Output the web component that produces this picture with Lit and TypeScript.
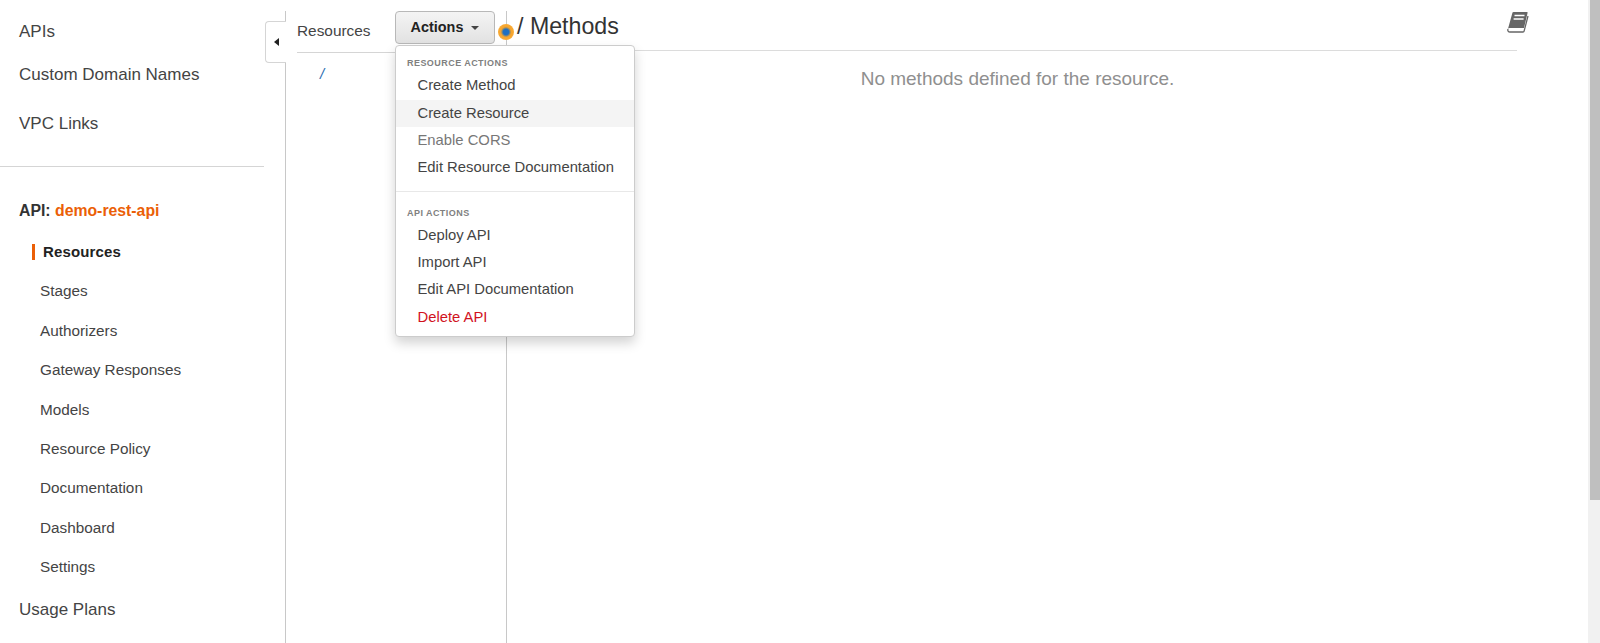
import { LitElement, html, css, svg } from "lit";
import { customElement } from "lit/decorators.js";

const subItems = ["Stages", "Authorizers", "Gateway Responses", "Models", "Resource Policy", "Documentation", "Dashboard", "Settings"];

@customElement("app-root")
export class AppRoot extends LitElement {
  static styles = css`
    :host { display: block; height: 643px; overflow: hidden; background: #fff; font-family: "Liberation Sans", Arial, sans-serif; color: #444; }
    .page { display: flex; height: 643px; position: relative; }
    .side { width: 285px; flex: none; padding-top: 11px; box-sizing: border-box; }
    .top { display: flex; flex-direction: column; width: 264px; border-bottom: 1px solid #d5d5d5; height: 156px; box-sizing: border-box; padding-left: 19px; }
    .top a { font-size: 17px; color: #444; }
    .a1 { margin-top: 11px; line-height: 20px; }
    .a2 { margin-top: 23px; line-height: 20px; }
    .a3 { margin-top: 29px; line-height: 20px; }
    .api { margin: 35px 0 0 19px; font-size: 15.8px; font-weight: bold; line-height: 18px; color: #333; }
    .api span { color: #eb5f07; }
    .subs { display: flex; flex-direction: column; margin-top: 12px; }
    .sub { height: 39.4px; line-height: 39.4px; padding-left: 40px; font-size: 15.3px; color: #444; }
    .sub.on { padding-left: 32px; }
    .sub.on b { display: inline-block; border-left: 3px solid #eb5f07; padding-left: 8px; height: 16px; line-height: 16px; font-size: 15px; color: #222; letter-spacing: 0.15px; }
    .usage { margin: 13px 0 0 19px; font-size: 17px; line-height: 20px; color: #444; }
    .body { flex: 1; min-width: 0; border-left: 1px solid #c8c8c8; margin-top: 11px; display: flex; }
    .res { width: 221px; flex: none; border-right: 1px solid #c8c8c8; box-sizing: border-box; padding-left: 11px; }
    .reshead { display: flex; align-items: flex-start; height: 41px; border-bottom: 1px solid #d5d5d5; }
    .reshead span { font-size: 15.4px; line-height: 39px; color: #444; width: 98px; }
    .btn { font: bold 14.4px "Liberation Sans", Arial, sans-serif; color: #222; width: 100px; height: 33px; box-sizing: border-box; border: 1px solid #b8b8b8; border-radius: 4px; background: linear-gradient(#f4f4f4, #e2e2e2); display: flex; align-items: center; justify-content: center; gap: 8px; padding: 0 0 2px; }
    .caret { width: 0; height: 0; border-left: 4px solid transparent; border-right: 4px solid transparent; border-top: 4px solid #444; margin-top: 2px; }
    .root { font-size: 15px; font-style: italic; color: #2a6cb0; margin: 12px 0 0 23px; line-height: 18px; }
    .detail { flex: 1; min-width: 0; padding-right: 83px; }
    .dhead { height: 39px; border-bottom: 1px solid #dcdcdc; display: flex; justify-content: space-between; padding-left: 10px; }
    .title { font-size: 23.2px; line-height: 31px; color: #333; }
    .book { margin-right: -12px; }
    .empty { text-align: center; font-size: 19px; line-height: 22px; color: #8f8f8f; margin: 17px 0 0 11px; }
    .tab { position: absolute; left: 265px; top: 21px; width: 21px; height: 42px; box-sizing: border-box; background: #fff; border: 1px solid #d5d5d5; border-right: none; border-radius: 4px 0 0 4px; display: flex; align-items: center; justify-content: center; }
    .tab i { width: 0; height: 0; border-top: 4px solid transparent; border-bottom: 4px solid transparent; border-right: 5px solid #222; }
    .dot { position: absolute; left: 498px; top: 24px; width: 16px; height: 16px; border-radius: 50%; background: radial-gradient(circle, #1f6fc0 0 2.8px, #8d8a70 4px, #f5a42c 5.2px, #f9ab36 8px); }
    .menu { position: absolute; left: 395px; top: 45px; width: 240px; height: 292px; box-sizing: border-box; background: #fff; border: 1px solid #ccc; border-radius: 4px; box-shadow: 0 6px 12px rgba(0,0,0,.175); padding-top: 11px; z-index: 2; }
    .hd { font-size: 9px; font-weight: bold; letter-spacing: 0.45px; color: #808080; padding-left: 11px; line-height: 12px; height: 15.4px; }
    .it { font-size: 14.8px; line-height: 27.2px; height: 27.2px; padding-left: 21.5px; color: #444; }
    .it.hover { background: #f4f4f4; }
    .it.dis { color: #777; }
    .it.del { color: #d1121d; }
    .sep { height: 1px; background: #e8e8e8; margin: 9.5px 0 15px; }
    .track { position: absolute; right: 0; top: 0; width: 12px; height: 643px; background: #f1f1f1; display: flex; justify-content: flex-end; }
    .thumb { width: 10px; height: 500px; background: #bfbfbf; }
  `;

  render() {
    return html`<div class="page">
      <div class="side">
        <div class="top">
          <a class="a1">APIs</a>
          <a class="a2">Custom Domain Names</a>
          <a class="a3">VPC Links</a>
        </div>
        <div class="api">API: <span>demo-rest-api</span></div>
        <div class="subs">
          <div class="sub on"><b>Resources</b></div>
          ${subItems.map((s) => html`<div class="sub">${s}</div>`)}
        </div>
        <div class="usage">Usage Plans</div>
      </div>
      <div class="body">
        <div class="res">
          <div class="reshead"><span>Resources</span><button class="btn">Actions <i class="caret"></i></button></div>
          <div class="root">/</div>
        </div>
        <div class="detail">
          <div class="dhead">
            <div class="title">/ Methods</div>
            <svg class="book" width="23" height="23" viewBox="0 0 23 23">
              ${svg`<path d="M6.5 1.5Q6.8 1 7.5 1H21q.8 0 .6.8L18 17H3.5Q2.6 17 2 17.8Z" fill="#666"/><path d="M2 18c-.6 1.6.2 3 2 3h13c.6 0 1-.3 1.1-.8L22 5" fill="none" stroke="#666" stroke-width="1.3"/><path d="M8.5 4.5h10M7.6 8h10" stroke="#fff" stroke-width="1.7"/>`}
            </svg>
          </div>
          <div class="empty">No methods defined for the resource.</div>
        </div>
      </div>
      <div class="tab"><i></i></div>
      <div class="dot"></div>
      <div class="menu">
        <div class="hd">RESOURCE ACTIONS</div>
        <div class="it">Create Method</div>
        <div class="it hover">Create Resource</div>
        <div class="it dis">Enable CORS</div>
        <div class="it">Edit Resource Documentation</div>
        <div class="sep"></div>
        <div class="hd">API ACTIONS</div>
        <div class="it">Deploy API</div>
        <div class="it">Import API</div>
        <div class="it">Edit API Documentation</div>
        <div class="it del">Delete API</div>
      </div>
      <div class="track"><div class="thumb"></div></div>
    </div>`;
  }
}
